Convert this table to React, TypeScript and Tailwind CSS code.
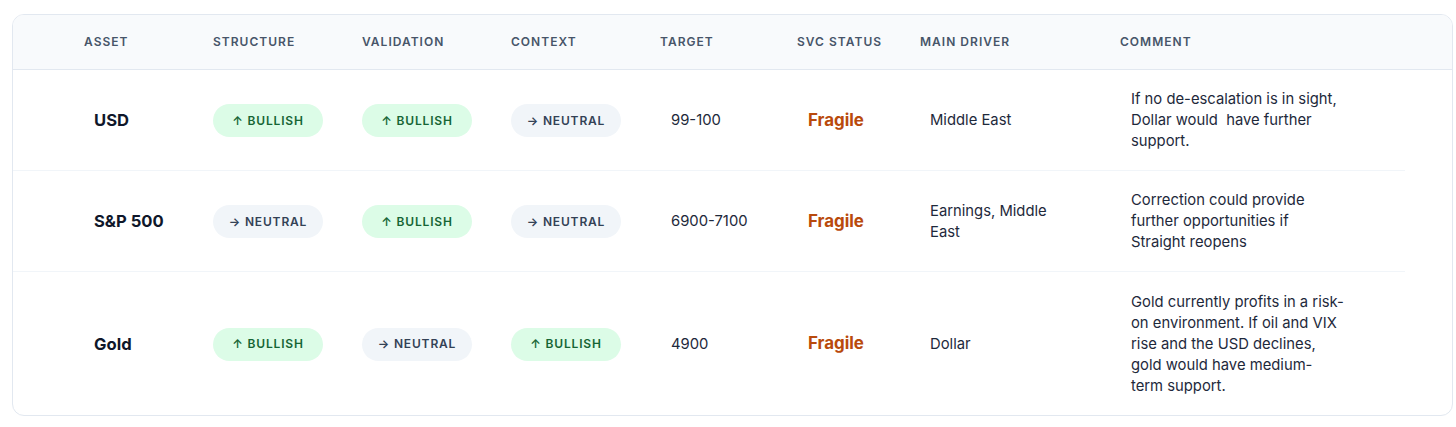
import React from 'react';

type Bias = 'bullish' | 'neutral';

interface Row {
  asset: string;
  structure: Bias;
  validation: Bias;
  context: Bias;
  target: string;
  status: string;
  driver: string;
  comment: string[];
}

const rows: Row[] = [
  {
    asset: 'USD',
    structure: 'bullish',
    validation: 'bullish',
    context: 'neutral',
    target: '99-100',
    status: 'Fragile',
    driver: 'Middle East',
    comment: ['If no de-escalation is in sight,', 'Dollar would\u00a0 have further', 'support.']
  },
  {
    asset: 'S&P 500',
    structure: 'neutral',
    validation: 'bullish',
    context: 'neutral',
    target: '6900-7100',
    status: 'Fragile',
    driver: 'Earnings, Middle East',
    comment: ['Correction could provide', 'further opportunities if', 'Straight reopens']
  },
  {
    asset: 'Gold',
    structure: 'bullish',
    validation: 'neutral',
    context: 'bullish',
    target: '4900',
    status: 'Fragile',
    driver: 'Dollar',
    comment: [
      'Gold currently profits in a risk-',
      'on environment. If oil and VIX',
      'rise and the USD declines,',
      'gold would have medium-',
      'term support.'
    ]
  }
];

const headers = ['Asset', 'Structure', 'Validation', 'Context', 'Target', 'SVC Status', 'Main Driver', 'Comment'];

const cols = 'grid grid-cols-[200px_149px_149px_149px_137px_123px_200px_285px]';

const Badge: React.FC<{ bias: Bias }> = ({ bias }) =>
  bias === 'bullish' ? (
    <span className="inline-flex items-center justify-center w-[110px] h-[33px] rounded-full bg-[#dcfce7] text-[#166534] text-[12px] font-semibold tracking-[0.07em]">
      ↑ BULLISH
    </span>
  ) : (
    <span className="inline-flex items-center justify-center w-[110px] h-[33px] rounded-full bg-[#f1f5f9] text-[#334155] text-[12px] font-semibold tracking-[0.07em]">
      → NEUTRAL
    </span>
  );

export default function App() {
  return (
    <div className="min-h-screen bg-white pt-[14px] pl-[12px] pr-[3px]" style={{ fontFamily: "'Inter', sans-serif" }}>
      <div className="w-[1441px] h-[402px] rounded-xl border border-[#e2e8f0] bg-white overflow-hidden">
        {/* Header */}
        <div className={`${cols} h-[55px] items-center bg-[#f8fafc] border-b border-[#e2e8f0]`}>
          {headers.map((h, i) => (
            <div
              key={h}
              className={`${i === 0 ? 'pl-[71px]' : ''} text-[12px] font-semibold uppercase tracking-[0.085em] text-[#475569]`}
            >
              {h}
            </div>
          ))}
        </div>

        {/* Rows */}
        <div className="w-[1392px]">
          {rows.map((r, idx) => (
            <div
              key={r.asset}
              className={`${cols} items-center pt-[1px] ${idx === 2 ? 'h-[143px]' : 'h-[101px] border-b border-[#f1f5f9]'}`}
            >
              <div className="pl-[81px] text-[16.6px] font-bold text-[#0f172a]">{r.asset}</div>
              <div><Badge bias={r.structure} /></div>
              <div><Badge bias={r.validation} /></div>
              <div><Badge bias={r.context} /></div>
              <div className="pl-[11px] text-[14.8px] text-[#1e293b]">{r.target}</div>
              <div className="pl-[11px] text-[16.9px] font-bold text-[#b94a0c]">{r.status}</div>
              <div className="pl-[10px] max-w-[150px] text-[14.8px] leading-[21px] text-[#1e293b]">{r.driver}</div>
              <div className="pl-[11px] text-[14.8px] leading-[21px] text-[#1e293b] whitespace-nowrap">
                {r.comment.map((line) => (
                  <div key={line}>{line}</div>
                ))}
              </div>
            </div>
          ))}
        </div>
      </div>
    </div>
  );
}
